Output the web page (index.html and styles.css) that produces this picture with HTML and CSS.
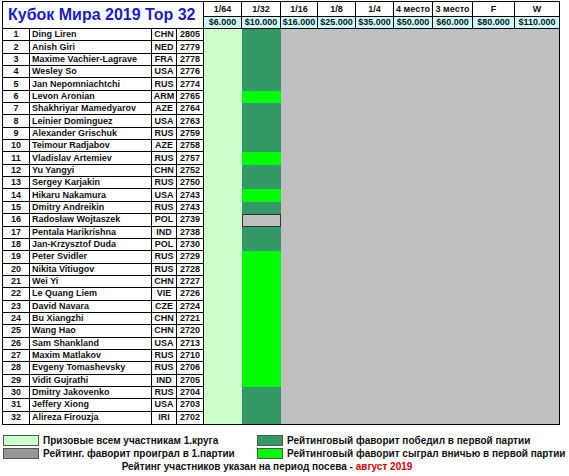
FILE: index.html
```html
<!DOCTYPE html>
<html lang="ru">
<head>
<meta charset="utf-8">
<title>Кубок Мира 2019 Top 32</title>
<link rel="stylesheet" href="styles.css">
</head>
<body>
<div class="sheet">
  <div class="grid">
    <div class="title">Кубок Мира 2019 Top 32</div>
    <div class="c64"></div>
    <div class="rest"></div>

    <div class="h1">1/64</div><div class="h1">1/32</div><div class="h1">1/16</div><div class="h1">1/8</div><div class="h1">1/4</div><div class="h1">4 место</div><div class="h1">3 место</div><div class="h1">F</div><div class="h1 lastc">W</div>
    <div class="h2">$6.000</div><div class="h2">$10.000</div><div class="h2">$16.000</div><div class="h2">$25.000</div><div class="h2">$35.000</div><div class="h2">$50.000</div><div class="h2">$60.000</div><div class="h2">$80.000</div><div class="h2 lastc">$110.000</div>

    <div class="n">1</div><div class="nm">Ding Liren</div><div class="cc">CHN</div><div class="rt">2805</div><div class="w"></div>
    <div class="n">2</div><div class="nm">Anish Giri</div><div class="cc">NED</div><div class="rt">2779</div><div class="w"></div>
    <div class="n">3</div><div class="nm">Maxime Vachier-Lagrave</div><div class="cc">FRA</div><div class="rt">2778</div><div class="w"></div>
    <div class="n">4</div><div class="nm">Wesley So</div><div class="cc">USA</div><div class="rt">2776</div><div class="w"></div>
    <div class="n">5</div><div class="nm">Jan Nepomniachtchi</div><div class="cc">RUS</div><div class="rt">2774</div><div class="w"></div>
    <div class="n">6</div><div class="nm">Levon Aronian</div><div class="cc">ARM</div><div class="rt">2765</div><div class="d"></div>
    <div class="n">7</div><div class="nm">Shakhriyar Mamedyarov</div><div class="cc">AZE</div><div class="rt">2764</div><div class="w"></div>
    <div class="n">8</div><div class="nm">Leinier Dominguez</div><div class="cc">USA</div><div class="rt">2763</div><div class="w"></div>
    <div class="n">9</div><div class="nm">Alexander Grischuk</div><div class="cc">RUS</div><div class="rt">2759</div><div class="w"></div>
    <div class="n">10</div><div class="nm">Teimour Radjabov</div><div class="cc">AZE</div><div class="rt">2758</div><div class="w"></div>
    <div class="n">11</div><div class="nm">Vladislav Artemiev</div><div class="cc">RUS</div><div class="rt">2757</div><div class="d"></div>
    <div class="n">12</div><div class="nm">Yu Yangyi</div><div class="cc">CHN</div><div class="rt">2752</div><div class="w"></div>
    <div class="n">13</div><div class="nm">Sergey Karjakin</div><div class="cc">RUS</div><div class="rt">2750</div><div class="w"></div>
    <div class="n">14</div><div class="nm">Hikaru Nakamura</div><div class="cc">USA</div><div class="rt">2743</div><div class="d"></div>
    <div class="n">15</div><div class="nm">Dmitry Andreikin</div><div class="cc">RUS</div><div class="rt">2743</div><div class="w"></div>
    <div class="n">16</div><div class="nm">Radosław Wojtaszek</div><div class="cc">POL</div><div class="rt">2739</div><div class="l"></div>
    <div class="n">17</div><div class="nm">Pentala Harikrishna</div><div class="cc">IND</div><div class="rt">2738</div><div class="w"></div>
    <div class="n">18</div><div class="nm">Jan-Krzysztof Duda</div><div class="cc">POL</div><div class="rt">2730</div><div class="w"></div>
    <div class="n">19</div><div class="nm">Peter Svidler</div><div class="cc">RUS</div><div class="rt">2729</div><div class="d"></div>
    <div class="n">20</div><div class="nm">Nikita Vitiugov</div><div class="cc">RUS</div><div class="rt">2728</div><div class="d"></div>
    <div class="n">21</div><div class="nm">Wei Yi</div><div class="cc">CHN</div><div class="rt">2727</div><div class="d"></div>
    <div class="n">22</div><div class="nm">Le Quang Liem</div><div class="cc">VIE</div><div class="rt">2726</div><div class="d"></div>
    <div class="n">23</div><div class="nm">David Navara</div><div class="cc">CZE</div><div class="rt">2724</div><div class="d"></div>
    <div class="n">24</div><div class="nm">Bu Xiangzhi</div><div class="cc">CHN</div><div class="rt">2721</div><div class="d"></div>
    <div class="n">25</div><div class="nm">Wang Hao</div><div class="cc">CHN</div><div class="rt">2720</div><div class="d"></div>
    <div class="n">26</div><div class="nm">Sam Shankland</div><div class="cc">USA</div><div class="rt">2713</div><div class="d"></div>
    <div class="n">27</div><div class="nm">Maxim Matlakov</div><div class="cc">RUS</div><div class="rt">2710</div><div class="d"></div>
    <div class="n">28</div><div class="nm">Evgeny Tomashevsky</div><div class="cc">RUS</div><div class="rt">2706</div><div class="d"></div>
    <div class="n">29</div><div class="nm">Vidit Gujrathi</div><div class="cc">IND</div><div class="rt">2705</div><div class="d"></div>
    <div class="n">30</div><div class="nm">Dmitry Jakovenko</div><div class="cc">RUS</div><div class="rt">2704</div><div class="w"></div>
    <div class="n">31</div><div class="nm">Jeffery Xiong</div><div class="cc">USA</div><div class="rt">2703</div><div class="w"></div>
    <div class="n end">32</div><div class="nm end">Alireza Firouzja</div><div class="cc end">IRI</div><div class="rt end">2702</div><div class="w"></div>
  </div>

  <div class="legend">
    <div class="item"><span class="sw sw-prize"></span>Призовые всем участникам 1.круга</div>
    <div class="item"><span class="sw sw-win"></span>Рейтинговый фаворит победил в первой партии</div>
    <div class="item"><span class="sw sw-lost"></span>Рейтинг. фаворит проиграл в 1.партии</div>
    <div class="item"><span class="sw sw-draw"></span>Рейтинговый фаворит сыграл вничью в первой партии</div>
  </div>
  <div class="note">Рейтинг участников указан на период посева - <span class="red">август 2019</span></div>
</div>
</body>
</html>
```

FILE: styles.css
```css
* { box-sizing: border-box; }
html, body { margin: 0; padding: 0; background: #fff; }
body {
  font-family: "Liberation Sans", Arial, sans-serif;
  font-weight: bold;
  font-size: 9px;
  color: #111;
}
.sheet { padding: 1px 0 0 2px; width: 569px; }

.grid {
  display: grid;
  width: 558px;
  grid-template-columns: 27px 122px 25px 27px 38px 39px 37px 38px 38px 39px 40px 42px 44px;
  grid-template-rows: 15px 12px repeat(32, 12.35px);
  border: 1px solid #000;
}
.grid > div {
  display: flex;
  align-items: center;
  justify-content: center;
  white-space: nowrap;
  overflow: hidden;
  line-height: 1;
}
.title {
  grid-column: 1 / 5;
  grid-row: 1 / 3;
  border-right: 1px solid #000;
  border-bottom: 1px solid #000;
  font-size: 16px;
  color: #1a1ac8;
  justify-content: flex-start !important;
  padding-left: 5px;
}
.c64 {
  grid-column: 5;
  grid-row: 3 / 35;
  background: #ccffcc;
}
.rest {
  grid-column: 7 / 14;
  grid-row: 3 / 35;
  background: #c0c0c0;
}
.h1, .h2 {
  border-right: 1px solid #000;
  border-bottom: 1px solid #000;
}
.h2 { background: #ccffff; }
.lastc { border-right: 0; }

.n, .nm, .cc, .rt {
  border-right: 1px solid #000;
  border-bottom: 1px solid #000;
}
.nm { justify-content: flex-start !important; padding-left: 2px; }
.end { border-bottom: 0; }

.w { background: #339966; }
.d { background: #00ff00; }
.l { background: #c0c0c0; border: 1px solid #333; }

.legend {
  display: grid;
  grid-template-columns: 254px auto;
  row-gap: 2px;
  margin-top: 10px;
  padding-left: 1px;
  font-size: 10px;
}
.item {
  display: flex;
  align-items: center;
  gap: 4px;
  height: 11px;
  white-space: nowrap;
}
.sw {
  display: block;
  width: 36px;
  height: 11px;
  border: 1px solid #555;
  flex: none;
}
.item:nth-child(even) .sw { width: 26px; }
.sw-prize { background: #ccffcc; }
.sw-win { background: #339966; }
.sw-lost { background: #969696; }
.sw-draw { background: #00ff00; }

.note {
  text-align: center;
  font-size: 10px;
  margin-top: 2px;
  width: 530px;
}
.red { color: #e00000; }
```
